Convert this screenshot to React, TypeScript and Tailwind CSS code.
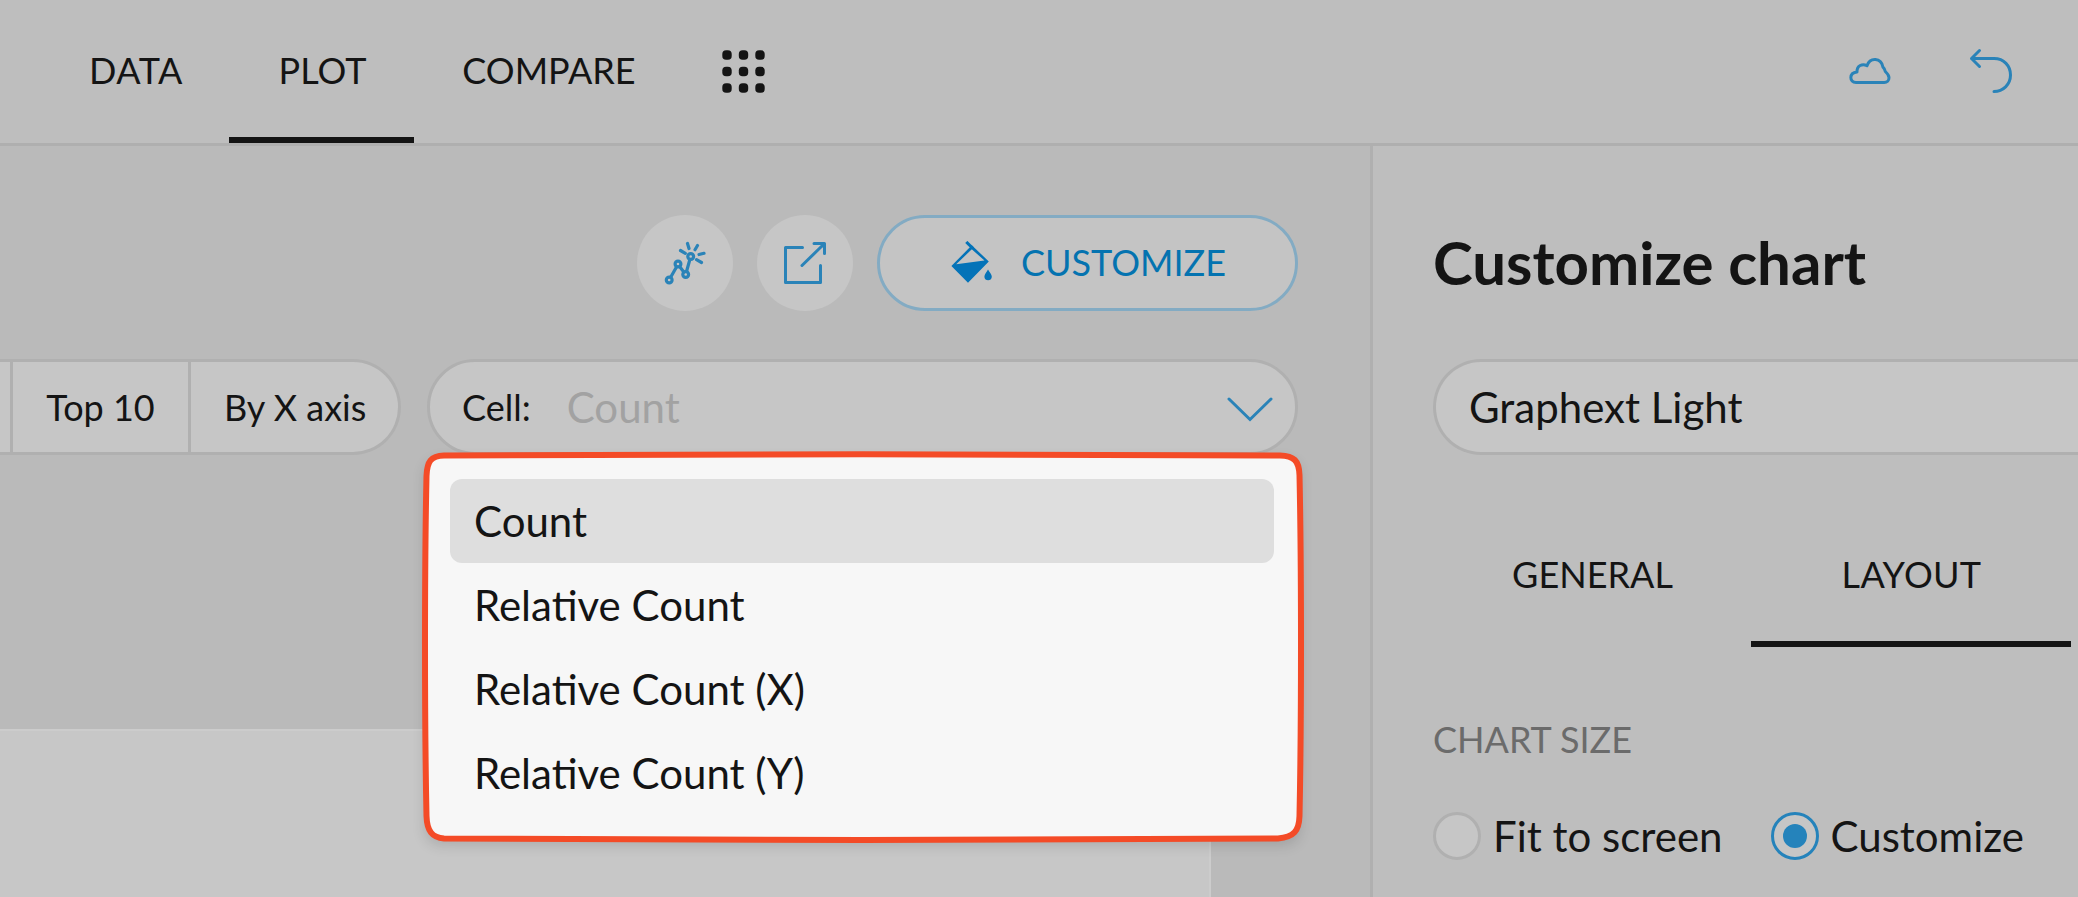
import React from "react";

const options = ["Count", "Relative Count", "Relative Count (X)", "Relative Count (Y)"];

function GridDots() {
  const steps = [5, 21.5, 38];
  return (
    <svg className="h-[43px] w-[43px]" viewBox="0 0 43 43" fill="#141414">
      {steps.map((y) => steps.map((x) => <rect key={`${x}-${y}`} x={x - 4.7} y={y - 4.7} width="9.4" height="9.4" rx="3.8" />))}
    </svg>
  );
}

function CloudIcon() {
  return (
    <svg className="h-[28px] w-[42px]" viewBox="0 0 42 28" fill="none" stroke="#2a83b8" strokeWidth="3" strokeLinejoin="round">
      <path d="M7 25.500C.2 25.500-.3 15.800 8 15C7.800 8.600 13.300 6.200 18 8.700C21 .3 32 .3 34 10.200C35.200 11.300 35.900 12.900 36.300 14.500C38.500 16.500 40 18.500 40 20.700C40 23.500 38 25.500 35.200 25.500Z" />
    </svg>
  );
}

function UndoIcon() {
  return (
    <svg className="h-[46px] w-[44px]" viewBox="0 0 44 46" fill="none" stroke="#2a83b8" strokeWidth="3" strokeLinecap="round" strokeLinejoin="round">
      <path d="M10.500 2.500L2.500 10.500L10.500 18.500M2.500 10.500H25C35 10.500 41.500 18 41.500 27C41.500 36.500 34 43.500 25 43.500" />
    </svg>
  );
}

function InsightIcon() {
  return (
    <svg className="h-[44px] w-[44px]" viewBox="0 0 44 44" fill="none" stroke="#2a83b8" strokeWidth="3.2" strokeLinecap="round">
      <circle cx="6.200" cy="39" r="2.900" />
      <circle cx="15" cy="23" r="2.900" />
      <circle cx="22.700" cy="33.500" r="2.900" />
      <circle cx="27.700" cy="15.500" r="2.900" />
      <path d="M7.800 36L13.500 26M16.800 25.700L20.800 31M23.600 30.200L26.800 18.800M17.500 9.500L22.300 12.300M24.500 2.500L26 7.500M34.500 4.500L32 8.700M41 12.300L36 13.500M33.500 18.700L38.500 21.500" />
    </svg>
  );
}

function ExportIcon() {
  return (
    <svg className="h-[44px] w-[44px]" viewBox="0 0 44 44" fill="none" stroke="#2a83b8" strokeWidth="3" strokeLinecap="round" strokeLinejoin="round">
      <path d="M19.500 6.500H2.500V41.500H37.500V24.500M19 24.500L40.500 3.500M31 2.500H41.500V12.500" />
    </svg>
  );
}

function BucketIcon() {
  return (
    <svg className="h-[42px] w-[42px]" viewBox="0 0 42 42" fill="none">
      <path d="M20.800 4.200L37.800 20.500L17 41.800L.4 25Z M20.800 8.300L5.200 23.200L33.500 19.600Z" fill="#0473b8" fillRule="evenodd" />
      <path d="M15.300 1L22 7.500" stroke="#0473b8" strokeWidth="3.100" />
      <path d="M37 28.500C35.500 31.500 33.400 33.200 33.400 35.800C33.400 40.500 40.800 40.500 40.800 35.800C40.800 33.200 38.500 31.500 37 28.500Z" fill="#0473b8" />
    </svg>
  );
}

function OptionsMenu() {
  return (
    <div className="absolute -left-[5px] top-[92px] z-10 h-[385px] w-[875px] rounded-[16px] bg-[#f7f7f7] px-[25px] pt-[25px] shadow-[0_6px_14px_rgba(0,0,0,0.14)]">
      <ul>
        {options.map((label, i) => (
          <li
            key={label}
            className={
              i === 0
                ? "flex h-[84px] w-[824px] items-center rounded-[12px] bg-[#dedede] pb-px pl-[24px] text-[42px]"
                : "flex h-[84px] w-[824px] items-center pb-px pl-[24px] text-[42px]"
            }
          >
            {label}
          </li>
        ))}
      </ul>
      <svg className="absolute -left-[5px] -top-[5px] h-[395px] w-[885px]" viewBox="0 0 885 395" fill="none" stroke="#f44b27" strokeWidth="6">
        <path d="M24 6.500C180 5 700 4.500 860 6.500C874 7 879 11.500 879.500 26C881.500 120 881.500 270 879.500 367C879 382 874 388 858 389.500C700 391.500 180 391.500 24 389.500C12 388.500 7 382 6.500 367C4.500 270 4.500 120 6.500 27C7 12 11 7 24 6.500Z" />
      </svg>
    </div>
  );
}

export default function App() {
  return (
    <div className="flex h-[897px] w-[2078px] flex-col overflow-hidden bg-[#bababa] font-['Lato','Carlito',sans-serif] leading-none text-[#141414]">
      <header className="flex h-[146px] shrink-0 items-stretch border-b-[3px] border-[#afafaf] bg-[#bebebe] text-[36px]">
        <nav className="flex pl-[44px]">
          <a className="flex w-[185px] items-center justify-center pb-[3px] pr-px tracking-[0.6px]">DATA</a>
          <a className="flex w-[185px] items-center justify-center border-b-[6px] border-[#141414] pl-[2px] pt-[3px]">PLOT</a>
          <a className="flex w-[270px] items-center justify-center pb-[3px]">COMPARE</a>
        </nav>
        <div className="flex items-center pb-px pl-[38px]">
          <GridDots />
        </div>
        <div className="ml-auto flex items-center gap-[78px] pb-px pr-[65px]">
          <CloudIcon />
          <UndoIcon />
        </div>
      </header>

      <div className="flex min-h-0 flex-1">
        <main className="flex w-[1370px] shrink-0 flex-col">
          <div className="flex justify-end gap-[24px] pr-[72px] pt-[69px]">
            <button className="flex size-[96px] items-center justify-center rounded-full bg-[#c6c6c6]">
              <InsightIcon />
            </button>
            <button className="flex size-[96px] items-center justify-center rounded-full bg-[#c6c6c6]">
              <ExportIcon />
            </button>
            <button className="flex h-[96px] w-[421px] items-center gap-[28px] rounded-full border-[3px] border-[#83abc3] bg-[#c4c4c4] pb-[2px] pl-[71px] text-[36px] text-[#0473b0]">
              <BucketIcon />
              CUSTOMIZE
            </button>
          </div>

          <div className="mt-[48px] flex text-[36px]">
            <div className="flex h-[96px] w-[401px] rounded-r-full border-y-[3px] border-r-[3px] border-[#b0b0b0] bg-[#c6c6c6]">
              <div className="w-[13px] border-r-[3px] border-[#b0b0b0]" />
              <div className="flex w-[178px] items-center justify-center border-r-[3px] border-[#b0b0b0] pb-px">Top 10</div>
              <div className="flex items-center pb-px pl-[33px]">By X axis</div>
            </div>
            <div className="relative ml-[26px] flex h-[96px] w-[871px] items-center rounded-full border-[3px] border-[#b0b0b0] bg-[#c6c6c6] pb-px pl-[32px] pr-[22px]">
              <span>Cell:</span>
              <span className="ml-[36px] text-[42px] text-[#a2a2a2]">Count</span>
              <svg className="ml-auto mt-[5px] h-[26px] w-[46px]" viewBox="0 0 46 26" fill="none" stroke="#2a83b8" strokeWidth="3" strokeLinecap="round">
                <path d="M2 3L23 23.500L44 3" />
              </svg>
              <OptionsMenu />
            </div>
          </div>

          <div className="mt-[274px] w-[1211px] flex-1 border-r-2 border-t-2 border-[#cccccc] bg-[#c7c7c7]" />
        </main>

        <aside className="flex flex-1 flex-col border-l-[3px] border-[#b0b0b0] bg-[#bebebe] pl-[60px]">
          <h1 className="mt-[86px] text-[60px] font-bold leading-[60px]">Customize chart</h1>
          <div className="mt-[67px] flex h-[96px] items-center rounded-l-full border-y-[3px] border-l-[3px] border-[#b0b0b0] bg-[#c6c6c6] pb-px pl-[33px] text-[42px]">
            Graphext Light
          </div>
          <div className="mt-[48px] flex h-[144px] text-[36px]">
            <div className="flex w-[318px] items-center justify-center pb-[2px] pl-px">GENERAL</div>
            <div className="flex w-[320px] items-center justify-center border-b-[6px] border-[#141414] pl-px pt-[4px] tracking-[0.3px]">LAYOUT</div>
          </div>
          <div className="mt-[74px] text-[36px] text-[#6b6b6b]">CHART SIZE</div>
          <div className="mt-[55px] flex items-center text-[42px]">
            <span className="size-[48px] rounded-full border-[3px] border-[#b0b0b0] bg-[#c6c6c6]" />
            <span className="ml-[12px]">Fit to screen</span>
            <span className="ml-[48px] flex size-[48px] items-center justify-center rounded-full border-[3px] border-[#2583bb] bg-[#c6c6c6]">
              <span className="size-[24px] rounded-full bg-[#2583bb]" />
            </span>
            <span className="ml-[12px]">Customize</span>
          </div>
        </aside>
      </div>
    </div>
  );
}
